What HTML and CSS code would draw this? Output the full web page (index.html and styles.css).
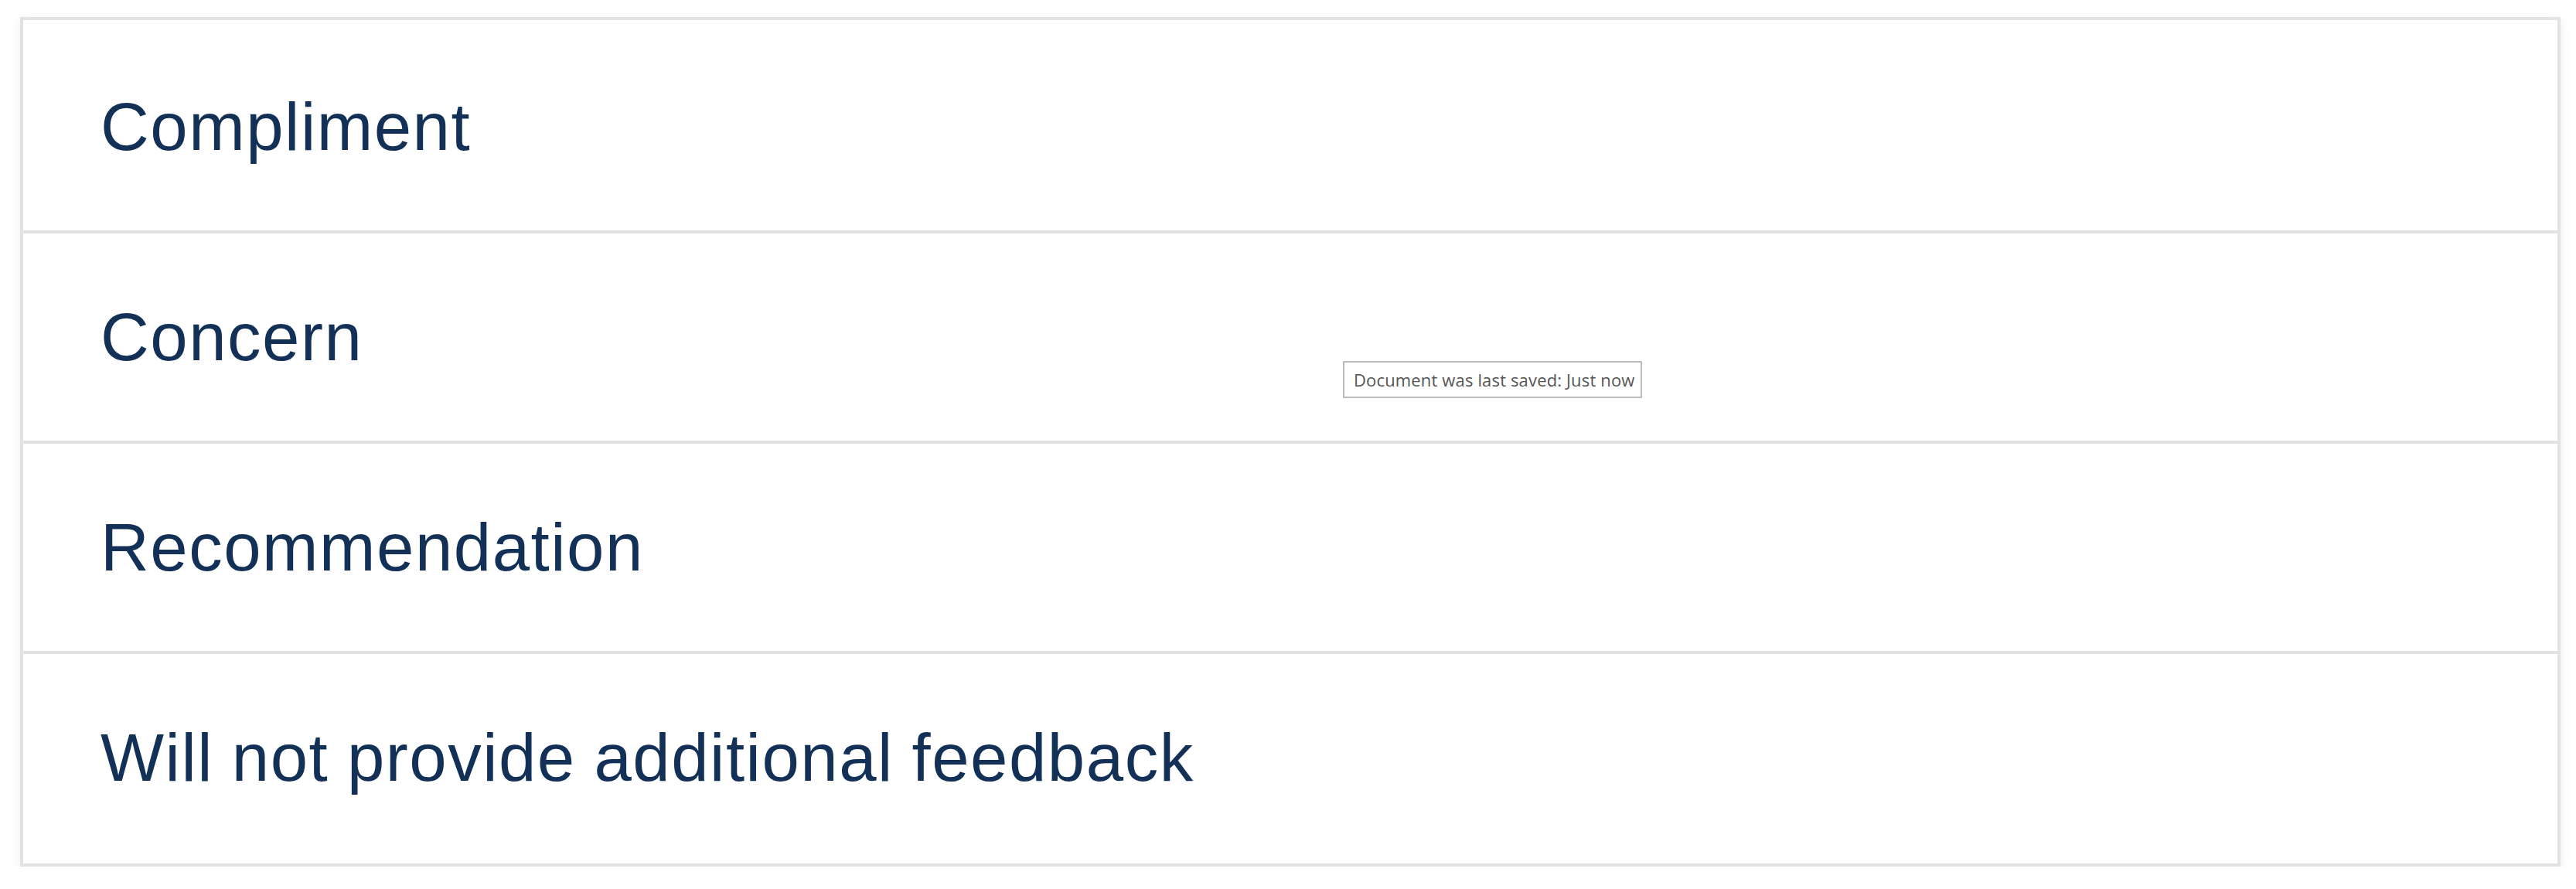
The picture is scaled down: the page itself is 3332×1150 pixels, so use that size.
FILE: index.html
```html
<!DOCTYPE html>
<html lang="en">
<head>
    <meta charset="UTF-8">
    <meta name="viewport" content="width=device-width, initial-scale=1.0">
    <title>Feedback type</title>
    <link rel="stylesheet" href="styles.css">
</head>
<body>
    <div class="page">
        <div class="choices">
            <div class="choice">Compliment</div>
            <div class="choice">Concern</div>
            <div class="choice">Recommendation</div>
            <div class="choice">Will not provide additional feedback</div>
        </div>
        <div class="tooltip">Document was last saved: Just now</div>
    </div>
</body>
</html>
```

FILE: styles.css
```css
body {
    margin: 0;
    background-color: #ffffff;
    font-family: "Liberation Sans", Arial, sans-serif;
}

.page {
    position: relative;
    padding: 22px 20px 0 26px;
}

.choices {
    display: flex;
    flex-direction: column;
    border: 4px solid #e2e2e2;
    padding: 4px 0 3px 0;
    background-color: #ffffff;
    box-shadow: 0 4px 14px rgba(0, 0, 0, 0.07);
}

.choice {
    display: flex;
    align-items: center;
    height: 268px;
    padding-left: 100px;
    font-size: 87px;
    letter-spacing: 1.5px;
    word-spacing: -2px;
    color: #133057;
    border-top: 4px solid #e2e2e2;
}

.choice:first-child {
    border-top: none;
}

/* hover tooltip over the list */
.tooltip {
    position: absolute;
    left: 1737px;
    top: 467px;
    height: 44px;
    padding: 0 8px 0 12px;
    border: 2px solid #bcbcbc;
    background-color: #ffffff;
    font-family: "Open Sans", "Noto Sans", sans-serif;
    font-size: 22px;
    letter-spacing: 0.15px;
    line-height: 44px;
    color: #555555;
    white-space: nowrap;
}
```
